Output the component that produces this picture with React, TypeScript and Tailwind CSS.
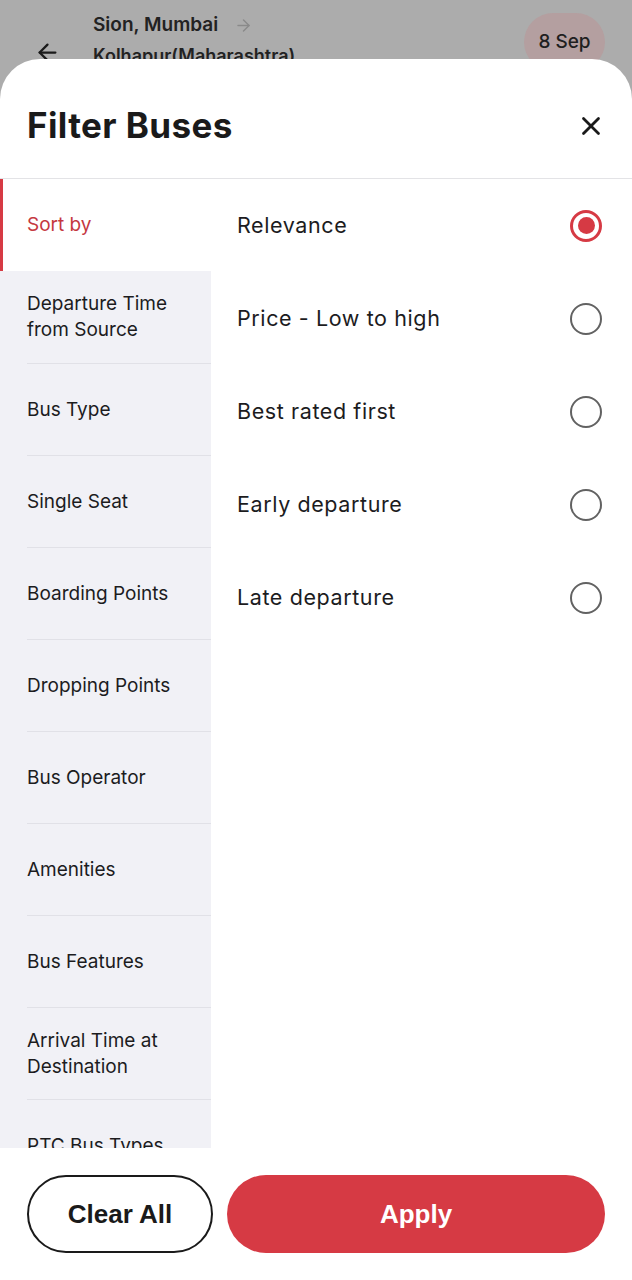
import { ArrowLeft, ArrowRight, X } from "lucide-react"

const filters = [
  "Sort by",
  "Departure Time\nfrom Source",
  "Bus Type",
  "Single Seat",
  "Boarding Points",
  "Dropping Points",
  "Bus Operator",
  "Amenities",
  "Bus Features",
  "Arrival Time at\nDestination",
  "PTC Bus Types",
]

const sortOptions = ["Relevance", "Price - Low to high", "Best rated first", "Early departure", "Late departure"]

function Radio({ checked }: { checked: boolean }) {
  if (checked) {
    return (
      <span className="w-[32px] h-[32px] rounded-full border-[3px] border-[#d63a44] flex items-center justify-center">
        <span className="w-[17px] h-[17px] rounded-full bg-[#d63a44]" />
      </span>
    )
  }
  return <span className="w-[32px] h-[32px] rounded-full border-[2.5px] border-[#626262]" />
}

export default function App() {
  return (
    <div className="relative w-[632px] h-[1280px] overflow-hidden bg-[#acacac] font-['Inter',sans-serif] text-[#1c1c1e]">
      {/* page behind the sheet, dimmed */}
      <div className="flex items-start h-[80px] pl-[34px] pr-[27px] pt-[13px]">
        <ArrowLeft size={27} strokeWidth={2} className="mt-[26px] text-[#1a1a1a]" />
        <div className="ml-[32px] flex-1">
          <div className="flex items-center gap-[16px] text-[19px] font-semibold text-[#222] leading-[24px]">
            Sion, Mumbai
            <ArrowRight size={19} strokeWidth={1.8} className="text-[#8a8a8a]" />
          </div>
          <div className="text-[18px] font-semibold text-[#222] leading-[24px] mt-[7px]">Kolhapur(Maharashtra)</div>
        </div>
        <div className="w-[81px] h-[58px] rounded-full bg-[#b49fa0] flex items-center justify-center text-[19px] font-medium text-[#1f1f1f]">
          8 Sep
        </div>
      </div>

      {/* bottom sheet */}
      <div className="absolute inset-x-0 top-[59px] bottom-0 bg-white rounded-t-[40px] flex flex-col">
        <div className="h-[120px] flex items-center justify-between pl-[27px] pr-[26px] pt-[14px] border-b border-[#e3e3e6] shrink-0">
          <h1 className="text-[35px] font-bold tracking-[0.4px] text-[#1a1a1a]">Filter Buses</h1>
          <X size={30} strokeWidth={2.2} className="text-[#1a1a1a]" />
        </div>

        <div className="flex flex-1 min-h-0">
          <div className="w-[211px] bg-[#f1f1f6] overflow-hidden shrink-0">
            {filters.map((f, i) =>
              i === 0 ? (
                <div
                  key={f}
                  className="h-[92px] bg-white border-l-[3px] border-[#d63a44] pl-[24px] flex items-center text-[19px] text-[#c5383f]"
                >
                  {f}
                </div>
              ) : (
                <div key={f} className="h-[92px] pl-[27px]">
                  <div
                    className={
                      "h-full flex items-center text-[19px] leading-[26px] whitespace-pre-line " +
                      (i > 1 ? "border-t border-[#e1e1e7]" : "")
                    }
                  >
                    {f}
                  </div>
                </div>
              )
            )}
          </div>

          <div className="flex-1 pl-[26px] pr-[30px]">
            {sortOptions.map((o, i) => (
              <div
                key={o}
                className="h-[93px] flex items-center justify-between text-[21.5px] tracking-[0.6px] text-[#1c1c1e]"
              >
                <span>{o}</span>
                <Radio checked={i === 0} />
              </div>
            ))}
          </div>
        </div>

        <div className="h-[132px] shrink-0 flex gap-[14px] px-[27px] pt-[27px] bg-white">
          <button className="w-[186px] h-[78px] rounded-full border-2 border-[#1a1a1a] text-[26px] font-bold text-[#1a1a1a] font-['Liberation_Sans',sans-serif]">
            Clear All
          </button>
          <button className="flex-1 h-[78px] rounded-full bg-[#d63a44] text-[26px] font-bold text-white font-['Liberation_Sans',sans-serif]">
            Apply
          </button>
        </div>
      </div>
    </div>
  )
}
